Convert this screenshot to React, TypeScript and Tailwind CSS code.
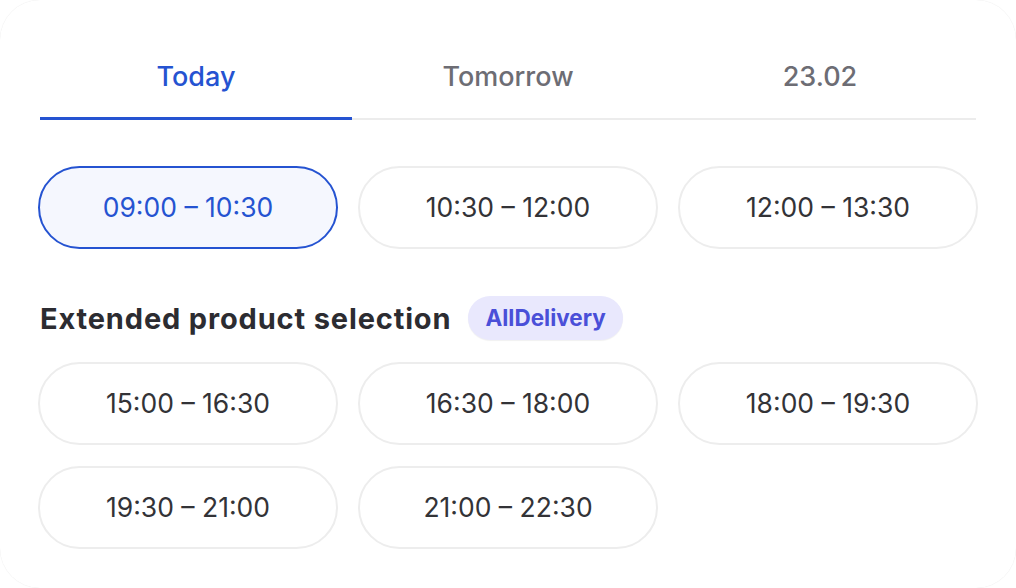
import React from "react";

const tabs = ["Today", "Tomorrow", "23.02"];
const row1 = ["09:00 – 10:30", "10:30 – 12:00", "12:00 – 13:30"];
const row2 = ["15:00 – 16:30", "16:30 – 18:00", "18:00 – 19:30", "19:30 – 21:00", "21:00 – 22:30"];

function Slot({ label, selected }: { label: string; selected?: boolean }) {
  return (
    <button
      className={
        "h-[83px] rounded-full border-2 flex items-center justify-center text-[26.5px] " +
        (selected
          ? "border-[#2553d1] bg-[#f5f7fe] text-[#2553d1]"
          : "border-[#ededed] bg-white text-[#333337]")
      }
    >
      {label}
    </button>
  );
}

export default function App() {
  return (
    <div className="w-[1016px] h-[588px] bg-white" style={{ fontFamily: "Inter, 'Noto Sans', sans-serif" }}>
      <div className="w-full h-full rounded-[40px] bg-white shadow-[0_0_1px_rgba(0,0,0,0.12)] px-[38px] pt-[37px]">
        <div className="mx-[2px] flex border-b-2 border-[#ececec]">
          {tabs.map((t, i) => (
            <div
              key={t}
              className={
                "flex-1 flex items-center justify-center text-[27px] font-medium " +
                (i === 0
                  ? "h-[83px] border-b-[3px] border-[#2553d1] -mb-[2px] pt-[1px] text-[#2553d1]"
                  : "h-[80px] pt-[1px] self-start text-[#6d6d74]")
              }
            >
              {t}
            </div>
          ))}
        </div>

        <div className="mt-[46px] grid grid-cols-3 gap-x-[20px]">
          {row1.map((s, i) => (
            <Slot key={s} label={s} selected={i === 0} />
          ))}
        </div>

        <div className="mt-[47px] ml-[2px] flex items-center h-[44px] gap-[17px]">
          <h2 className="pt-[2px] text-[29px] font-bold text-[#2c2c31] tracking-[0.85px]">Extended product selection</h2>
          <span className="h-[44px] px-[17px] rounded-full bg-[#e9e8fd] text-[#4a4fd8] text-[22.5px] font-bold flex items-center shadow-[0_1px_1px_rgba(0,0,0,0.06)]">
            AllDelivery
          </span>
        </div>

        <div className="mt-[22px] grid grid-cols-3 gap-x-[20px] gap-y-[21px]">
          {row2.map((s) => (
            <Slot key={s} label={s} />
          ))}
        </div>
      </div>
    </div>
  );
}
